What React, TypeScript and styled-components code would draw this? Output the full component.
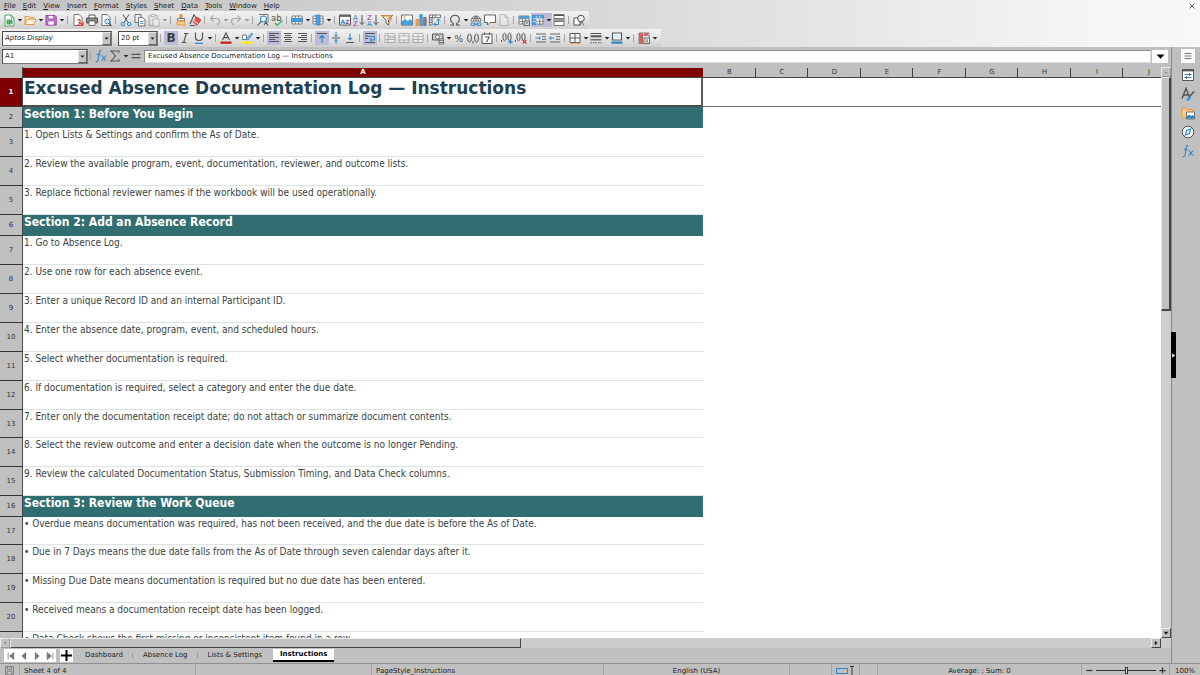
import React from "react";
import styled, { createGlobalStyle, css } from "styled-components";

const ink = "#555555";
const blue = "#2f86c6";
const ui = '"DejaVu Sans", sans-serif';

const Global = createGlobalStyle`
  * { box-sizing: border-box; }
  body { margin: 0; background: #c0c0c0; font-family: ${ui}; font-size: 7px; color: #1c1c1c; }
  button, input, select { font: inherit; color: inherit; margin: 0; padding: 0; border: 0; border-radius: 0; background: none; outline: none; }
  svg { display: block; flex: none; }
`;

const Window = styled.div`
  display: flex;
  flex-direction: column;
  height: 100vh;
  overflow: hidden;
`;

/* ---------- menu and toolbars ---------- */
const TopArea = styled.header`
  flex: none;
  background: linear-gradient(90deg, #c2c2c2 0%, #d8d8d8 50%, #f6f6f6 92%, #f8f8f8 100%);
`;
const MenuBar = styled.nav`
  display: flex;
  align-items: center;
  gap: 7px;
  height: 11px;
  padding: 0 4px;
`;
const MenuButton = styled.button`
  line-height: 10px;
  &::first-letter { text-decoration: underline; }
`;
const CloseButton = styled.button`
  display: flex;
  align-items: center;
  justify-content: center;
  width: 9px;
  height: 10px;
  margin-left: auto;
  background: #fff;
`;
const Toolbar = styled.div`
  display: flex;
  align-items: center;
  width: max-content;
  height: 18px;
  padding: 0 3px 0 2px;
  background: linear-gradient(180deg, #f2f2f2 0%, #e6e6e6 45%, #cfcfcf 100%);
`;
const Separator = styled.span`
  flex: none;
  width: 6px;
  height: 8px;
  background: linear-gradient(#a4a4a4, #a4a4a4) 2px 0 / 1px 8px no-repeat;
`;
const ToolButton = styled.button<{ $on?: boolean; $dim?: boolean }>`
  display: flex;
  align-items: center;
  justify-content: center;
  flex: none;
  width: 14px;
  height: 14px;
  ${(p) => p.$on && css`background: #bcbcd6;`}
  svg { opacity: ${(p) => (p.$dim ? 0.4 : 1)}; }
`;
const CaretButton = styled(ToolButton)`
  width: 7px;
`;
const ComboBox = styled.label<{ $w: number }>`
  position: relative;
  flex: none;
  width: ${(p) => p.$w}px;
  height: 15px;
  background: #fff;
  border: 1px solid #4c4c4c;
  border-right-color: #777;
  border-bottom-color: #777;
  & + & { margin-left: 6px; }
`;
const ComboSelect = styled.select<{ $italic?: boolean }>`
  display: block;
  appearance: none;
  width: 100%;
  height: 100%;
  padding-left: 2px;
  font-style: ${(p) => (p.$italic ? "italic" : "normal")};
`;
const ComboArrow = styled.span`
  position: absolute;
  top: 0;
  right: 0;
  bottom: 0;
  display: flex;
  align-items: center;
  justify-content: center;
  width: 9px;
  background: #c4c4c4;
  border: 1px solid #e8e8e8;
  border-right-color: #666;
  border-bottom-color: #666;
  pointer-events: none;
`;

/* ---------- work area ---------- */
const Body = styled.div`
  display: flex;
  flex: 1;
  min-height: 0;
`;
const Main = styled.main`
  display: flex;
  flex-direction: column;
  flex: 1;
  min-width: 0;
`;
const FormulaBar = styled.div`
  display: flex;
  align-items: center;
  flex: none;
  height: 18px;
  padding: 0 3px 0 2px;
`;
const FormulaInput = styled.input`
  flex: 1;
  min-width: 0;
  height: 13px;
  margin-left: 1px;
  padding: 0 3px;
  background: #fff;
  border: 1px solid #8c8c8c;
  border-right-color: #ddd;
  border-bottom-color: #ddd;
`;
const ExpandButton = styled.button`
  display: flex;
  align-items: center;
  justify-content: center;
  width: 16px;
  height: 13px;
  margin-left: 1px;
  background: #fff;
`;
const SheetArea = styled.div`
  display: flex;
  flex: 1;
  min-height: 0;
  padding-top: 2px;
`;
const GridView = styled.div`
  flex: 1;
  min-width: 0;
  overflow: hidden;
  background: #fff;
`;
const Grid = styled.table`
  table-layout: fixed;
  border-collapse: separate;
  border-spacing: 0;
  width: 1175px;
`;
const Col = styled.col<{ $w: number }>`
  width: ${(p) => p.$w}px;
`;
const headCell = css`
  padding: 0;
  background: #c0c0c0;
  color: #333;
  font-size: 7px;
  font-weight: 400;
  text-align: center;
`;
const ColumnHead = styled.th<{ $active?: boolean }>`
  ${headCell}
  height: 11px;
  line-height: 9px;
  border-bottom: 1px solid #484848;
  background: linear-gradient(#404040, #404040) right 1px / 1px 9px no-repeat, #c0c0c0;
  ${(p) => p.$active && css`
    background: linear-gradient(#c0c0c0 1px, #7f0000 1px);
    color: #fff;
    font-weight: 700;
  `}
`;
const Corner = styled.td`
  ${headCell}
  border-right: 1px solid #484848;
`;
const RowHead = styled.th<{ $active?: boolean }>`
  ${headCell}
  border-right: 1px solid #484848;
  border-bottom: 1px solid #333;
  ${(p) => p.$active && css`
    background: #7f0000;
    color: #fff;
    font-weight: 700;
  `}
`;
type Kind = "title" | "section" | "line";
const Cell = styled.td<{ $kind: Kind }>`
  padding: 0 0 0 1px;
  vertical-align: top;
  white-space: nowrap;
  color: #3a4245;
  ${(p) => p.$kind === "title" && css`
    height: 29px;
    font-size: 17px;
    line-height: 21px;
    font-weight: 700;
    color: #1d4154;
    border-right: 2px solid #5c5c5c;
    border-bottom: 2px solid #4c4c4c;
  `}
  ${(p) => p.$kind === "section" && css`
    height: 21px;
    font-size: 12px;
    line-height: 14px;
    font-weight: 700;
    font-family: "DejaVu Sans Condensed", "DejaVu Sans", sans-serif;
    color: #fff;
    background: #306e72;
  `}
  ${(p) => p.$kind === "line" && css`
    height: 29px;
    font-size: 10px;
    line-height: 13px;
    font-family: "DejaVu Sans Condensed", "DejaVu Sans", sans-serif;
    border-bottom: 1px solid #dde3e3;
    tr:nth-child(4n + 13) > & { height: 28px; }
  `}
`;
const EmptyCells = styled.td<{ $line?: boolean }>`
  padding: 0;
  border-bottom: ${(p) => (p.$line ? "1px solid #6a6a6a" : "0")};
`;

/* ---------- scroll bars ---------- */
const VScroll = styled.div`
  display: flex;
  flex-direction: column;
  flex: none;
  width: 10px;
  background: #cecece;
`;
const HScroll = styled.div`
  display: flex;
  flex: none;
  height: 10px;
  padding-right: 10px;
  background: #cccccc;
`;
const bevel = css`
  background: #c2c2c2;
  border: 1px solid #ececec;
  border-right-color: #444;
  border-bottom-color: #444;
`;
const ScrollButton = styled.button<{ $faint?: boolean }>`
  ${bevel}
  display: flex;
  align-items: center;
  justify-content: center;
  flex: none;
  width: 10px;
  height: 10px;
  ${(p) => p.$faint && css`
    border-right-color: #999;
    border-bottom-color: #999;
  `}
`;
const VThumb = styled.div`
  ${bevel}
  border-right-width: 2px;
  border-bottom-width: 2px;
  flex: 233;
`;
const VRest = styled.div`
  flex: 319;
`;
const HThumb = styled.div`
  ${bevel}
  flex: 509;
`;
const HRest = styled.div`
  flex: 631;
`;

/* ---------- sheet tabs ---------- */
const TabBar = styled.div`
  display: flex;
  flex: none;
  height: 15px;
  padding: 1px 0 0 4px;
`;
const TabNav = styled.div`
  display: flex;
  align-items: center;
  width: 52px;
  height: 13px;
  background: #fff;
`;
const NavButton = styled.button`
  display: flex;
  align-items: center;
  justify-content: center;
  flex: 1;
  height: 13px;
`;
const AddButton = styled.button`
  display: flex;
  align-items: center;
  justify-content: center;
  width: 13px;
  height: 13px;
  margin: 0 2px 0 4px;
  background: #fff;
`;
const Tab = styled.button<{ $active?: boolean }>`
  height: 13px;
  padding: 0 10px;
  line-height: 11px;
  background: linear-gradient(#999, #999) right 4px / 1px 5px no-repeat;
  &:nth-last-child(2) { background: none; }
  ${(p) => p.$active && css`
    margin-left: 1px;
    padding: 0 7px;
    font-weight: 700;
    color: #000;
    background: #fff;
    border-bottom: 2px solid #000;
  `}
`;

/* ---------- sidebar ---------- */
const Sidebar = styled.aside`
  position: relative;
  display: flex;
  flex-direction: column;
  align-items: center;
  gap: 5px;
  flex: none;
  width: 29px;
  padding: 2px 0 0 4px;
  border-left: 1px solid #8a8a8a;
`;
const DeckButton = styled.button<{ $light?: boolean }>`
  display: flex;
  align-items: center;
  justify-content: center;
  width: 14px;
  height: 14px;
  background: ${(p) => (p.$light ? "#fff" : "none")};
`;
const Grip = styled.button`
  position: absolute;
  left: -1px;
  top: 285px;
  display: flex;
  align-items: center;
  justify-content: center;
  width: 5px;
  height: 46px;
  background: #000;
`;

/* ---------- status bar ---------- */
const StatusBar = styled.footer`
  display: grid;
  grid-template-columns: 20px 176fr 176fr 232fr 186fr 42px 28px 18px 204fr 88px 30px;
  flex: none;
  height: 12px;
  border-top: 1px solid #8f8f8f;
`;
const StatusItem = styled.div<{ $align?: "center" | "start" }>`
  display: flex;
  align-items: center;
  justify-content: ${(p) => p.$align ?? "center"};
  padding: 1px 4px 0;
  line-height: 10px;
  white-space: nowrap;
  border-right: 1px solid #a4a4a4;
  &:last-child { border-right: 0; }
`;
const ZoomGroup = styled(StatusItem)`
  padding: 1px 3px 0 4px;
  gap: 3px;
`;
const ZoomStep = styled.button`
  display: flex;
  flex: none;
`;
const ZoomRange = styled.input`
  appearance: none;
  flex: 1;
  min-width: 0;
  height: 9px;
  background: linear-gradient(#333, #333) center / 100% 1px no-repeat;
  &::-webkit-slider-thumb {
    appearance: none;
    width: 3px;
    height: 7px;
    background: #ddd;
    border: 1px solid #333;
  }
`;

/* ---------- icons, drawn on a 14-unit square ---------- */
const page = <path d="M3 1.5h5l3 3v8H3z" fill="#fff" stroke={ink} strokeWidth=".8" />;
const gridLines = <path d="M2 3h10v8H2zM2 5.7h10M2 8.4h10M5.3 3v8M8.7 3v8" fill="#fff" stroke={ink} strokeWidth=".7" />;
const letter = (t: string, x: number, y: number, s: number, fill = ink, w = 400) => (
  <text x={x} y={y} fontSize={s} fill={fill} fontWeight={w} fontFamily="DejaVu Sans, sans-serif">{t}</text>
);
const lines = (rows: [number, number][]) => rows.map(([a, b], i) => (
  <path key={i} d={`M${a} ${2.5 + i * 2}H${b}`} stroke={ink} strokeWidth="1" />
));

const icons: Record<string, React.ReactNode> = {
  new: <><path d="M3 2h6l3 3v8H3z" fill="#fff" stroke="#3a9a55" strokeWidth=".9" /><path d="M9 2v3h3" fill="none" stroke="#3a9a55" strokeWidth=".8" /><path d="M5 7h5v4H5zM5 9h5M7.5 7v4" fill="#8fd0a0" stroke="#2d9048" strokeWidth=".8" /></>,
  open: <><path d="M2 11.5V3.5h3.500l1 1.200H11V6" fill="#fbe3c4" stroke="#e79a3c" /><path d="M2 11.500l2.200-5.300H13L11 11.500z" fill="#fff3e0" stroke="#e79a3c" /></>,
  save: <><path d="M2 2.500h9l1.200 1.200v8.300H2z" fill="#c77ad0" stroke="#9a3ea8" /><path d="M4.200 2.500h5v3.300h-5zM4 8h6v4H4z" fill="#fff" stroke="#9a3ea8" strokeWidth=".6" /></>,
  pdf: <>{page}<path d="M7 7.500c0-2 3-1 2 1.500s-2.500 3.500-1 3.500M8 9l4 3M12 9v3.200H9" fill="none" stroke="#d8322c" strokeWidth="1.100" /></>,
  print: <><path d="M4 5V2h6v3" fill="#fff" stroke={ink} /><path d="M1.500 5h11v5h-11z" fill="#888" stroke={ink} /><path d="M4 8h6v4.500H4z" fill="#fff" stroke={ink} strokeWidth=".8" /></>,
  preview: <>{page}<circle cx="8.3" cy="8.500" r="2.400" fill="#d6ecfa" stroke={blue} /><path d="M10 10.500l2.500 2.500" stroke={ink} strokeWidth="1.100" /></>,
  cut: <><path d="M4 1.500l5 8M10 1.500l-5 8" stroke={ink} strokeWidth="1" /><circle cx="3.800" cy="11" r="1.700" fill="none" stroke={blue} /><circle cx="10.200" cy="11" r="1.700" fill="none" stroke={blue} /></>,
  copy: <><path d="M2 1.500h6v8H2z" fill="#eee" stroke={ink} strokeWidth=".8" /><path d="M5.500 4.500h4l2.500 2.400v6H5.500z" fill="#fff" stroke={ink} strokeWidth=".8" /><path d="M7 8.500h3.500M7 10.500h3.500" stroke={blue} strokeWidth=".8" /></>,
  paste: <><path d="M2 2.500h8v10H2z" fill="#ddd" stroke={ink} /><path d="M4 1.500h4v2H4zM6 6h6v7H6z" fill="#fff" stroke={ink} strokeWidth=".8" /></>,
  brush: <><path d="M6 1.500h2v4H6z" fill="#f0a04a" stroke="#c77420" strokeWidth=".7" /><path d="M3.500 5.500h7v2.300h-7z" fill="#fff" stroke={ink} strokeWidth=".8" /><path d="M3 8h8v4H3z" fill="#f7c98d" stroke="#e08e2c" strokeWidth=".8" /></>,
  clear: <><path d="M2 11L6 2l3 4" fill="none" stroke={ink} strokeWidth="1.200" /><path d="M5 9l4-5 4 3-4 5.200z" fill="#e8504c" stroke="#b52c28" strokeWidth=".7" /><path d="M6 7.800l4 3" stroke="#fff" /><path d="M2 12.500h5" stroke={ink} /></>,
  undo: <path d="M5.500 2.500L2.500 5.500l3 3M2.500 5.500H9c4 1 3 5 0 6.500" fill="none" stroke={ink} strokeWidth="1.200" />,
  redo: <path d="M8.500 2.500l3 3-3 3M11.500 5.500H5c-4 1-3 5 0 6.500" fill="none" stroke={ink} strokeWidth="1.200" />,
  find: <><path d="M3 1.500h9v8" fill="#eef5fb" stroke={ink} strokeWidth=".8" /><circle cx="7.500" cy="6" r="3" fill="#fff" stroke={blue} strokeWidth="1.100" /><path d="M5.300 8.300L1.500 12.500M8 12l2-3 2 3.400" fill="none" stroke={ink} strokeWidth="1.100" /></>,
  spell: <>{letter("ab", 1, 7.5, 8.5)}<path d="M5 10l2.300 2.300L12.500 7.500" fill="none" stroke="#3fa564" strokeWidth="1.200" /></>,
  row: <>{gridLines}<path d="M1.500 5.500h11v3.200h-11z" fill="#4aa0de" stroke={blue} strokeWidth=".7" /></>,
  column: <>{gridLines}<path d="M5.200 2h3.700v10H5.200z" fill="#4aa0de" stroke={blue} strokeWidth=".7" /></>,
  sort: <><path d="M1.500 2h11v10h-11z" fill="#fff" stroke={ink} /><path d="M1.500 3h11" stroke={ink} strokeWidth="1.600" />{letter("A", 2.5, 10.500, 6, blue, 700)}{letter("Z", 7.2, 10.500, 6, "#9a3ea8", 700)}</>,
  sortUp: <>{letter("A", 1, 6.500, 7, blue)}{letter("Z", 1, 13, 7, "#9a3ea8")}<path d="M10 2v9.500M7.800 9.200L10 11.600l2.300-2.400" fill="none" stroke={ink} /></>,
  sortDown: <>{letter("Z", 1, 6.500, 7, "#9a3ea8")}{letter("A", 1, 13, 7, blue)}<path d="M10 2v9.500M7.800 9.200L10 11.600l2.300-2.400" fill="none" stroke={ink} /></>,
  filter: <><path d="M1.500 2.500h11L8.500 7v5L6 10V7z" fill="#fff" stroke={ink} /><path d="M2 3h9L7.500 6.500M8.700 11l3-6" fill="none" stroke="#f0a04a" strokeWidth="1.300" /></>,
  image: <><path d="M1.500 2h11v10h-11z" fill="#fff" stroke={ink} strokeWidth=".8" /><path d="M2 11.600V9l3-3 2.600 2.400L10 6.500l2.200 2v3.100z" fill="#4aa0de" stroke={blue} strokeWidth=".6" /><circle cx="4.500" cy="4.300" r="1.100" fill="#f0a04a" /></>,
  chart: <><path d="M2 6.500h2.600v6H2z" fill="#f5a04a" stroke="#dd8022" strokeWidth=".6" /><path d="M5.800 1.500h2.600v11H5.800z" fill="#4aa0de" stroke={blue} strokeWidth=".6" /><path d="M9.600 4.500h2.600v8H9.600z" fill="#888" stroke={ink} strokeWidth=".6" /></>,
  pivot: <><path d="M1.500 2h11v2.600h-11zM1.500 4.600h2.600V12H1.500zM4.500 2v2.600M7.200 2v2.600M1.500 7h2.600M1.500 9.500h2.600" fill="#fff" stroke={ink} strokeWidth=".8" /><path d="M6 11.500h4.500V6M8.800 7.700l1.700-1.900 1.800 1.900M7.600 9.700L5.800 11.500l1.800 1.700" fill="none" stroke={blue} /></>,
  omega: <path d="M2 12h3.400v-1.400C1 8 2.300 2.200 7 2.200S13 8 8.600 10.600V12H12" fill="none" stroke={ink} strokeWidth="1.100" />,
  link: <><path d="M2 8a5 5 0 0 1 10 0zM7 3v5M3 5.500h8M4.800 8c0-2 .7-4 2.200-5 1.500 1 2.200 3 2.200 5" fill="#fff" stroke={ink} strokeWidth=".8" /><path d="M2 10h4v2.300H2zM8 10h4v2.300H8zM5 11.200h4" fill="none" stroke={blue} strokeWidth=".9" /></>,
  comment: <path d="M1.500 2h11v7.500H7L4.500 12V9.500h-3z" fill="#fff" stroke={ink} strokeWidth=".9" />,
  header: <><path d="M3 1.500h5l3 3v8H3z" fill="#eee" stroke={ink} strokeWidth=".8" /><path d="M8 1.500v3h3" fill="none" stroke={ink} strokeWidth=".8" /></>,
  printArea: <>{gridLines}<path d="M2 3h10v2.400H2z" fill="#4aa0de" /><path d="M7 8h5.500v4.500H7zM8.500 10h2.500" fill="#ddd" stroke={ink} strokeWidth=".9" /></>,
  freeze: <>{gridLines}<path d="M1.500 2.500h11v3h-11zM1.500 5.500H5v6H1.500z" fill="#4aa0de" stroke={blue} strokeWidth=".7" /><path d="M5.300 2.500v9M1.500 5.700h11M8.700 2.500v3M1.500 8.500H5" stroke="#fff" strokeWidth=".6" /></>,
  split: <><path d="M2 1.500h10v4H2zM2 8.500h10v4H2z" fill="#fff" stroke={ink} strokeWidth=".8" /><path d="M2 2.500h10M1 7h12" stroke={ink} strokeWidth="1.100" /></>,
  shapes: <><path d="M2 5h6v7H2z" fill="#fff" stroke={ink} /><circle cx="9" cy="5.500" r="3.300" fill="#eee" stroke={ink} /><path d="M8 12.500l2-3.500 2 3.500" fill="none" stroke={ink} strokeWidth=".8" /></>,
  bold: letter("B", 2.5, 11.200, 12, "#3c3c3c", 700),
  italic: <path d="M6 2.500h4.500M3.500 11.500H8M8.300 2.500l-2.600 9" stroke={ink} strokeWidth="1.100" />,
  underline: <><path d="M3.500 1.500V6.500c0 4 7 4 7 0V1.500" fill="none" stroke={ink} strokeWidth="1.200" /><path d="M3 12.300h8" stroke={blue} strokeWidth="1.200" /></>,
  fontColor: <><path d="M3.500 9L7 1.800 10.500 9M4.800 6.600h4.400" fill="none" stroke={ink} strokeWidth="1.200" /><path d="M1.500 10.500h11v2.300h-11z" fill="#c9211e" /></>,
  highlight: <><path d="M1.500 10.500h11v2.300h-11z" fill="#ffef00" /><path d="M2.500 8.500V4h4v4.500z" fill="#fff" stroke={ink} strokeWidth=".8" /><path d="M6 8.500l5.500-6.500 1.300 1-4.500 6z" fill="#8cc4ea" stroke={blue} strokeWidth=".8" /></>,
  left: lines([[2, 12], [2, 8], [2, 12], [2, 8], [2, 12]]),
  center: lines([[3, 11], [4, 10], [3, 11], [4, 10], [3, 11]]),
  right: lines([[3, 12], [6, 12], [3, 12], [6, 12], [3, 12]]),
  top: <><path d="M2 2.500h10" stroke={ink} /><path d="M7 12V4.500M4.500 7L7 4.500 9.500 7" fill="none" stroke={blue} strokeWidth="1.200" /></>,
  middle: <><path d="M3 7h8" stroke={ink} /><path d="M7 1v4.500M5.200 3.800L7 5.500l1.800-1.700M7 13V8.500M5.200 10.200L7 8.500l1.800 1.700" fill="none" stroke={blue} /></>,
  bottom: <><path d="M3 11.500h8" stroke={ink} /><path d="M7 2.500v6M5 6.800l2 2 2-2" fill="none" stroke={blue} strokeWidth="1.100" /></>,
  wrap: <><path d="M2 2.500h10M2 5h3M2 7.500h3M2 11.500h10" stroke={ink} /><path d="M5 5.500h6.500v3.500H7M8.700 7.200L7 9l1.700 1.700" fill="none" stroke={blue} /></>,
  merge: <path d="M2 2.500h10v9H2zM2 5h10M2 8.500h10M5 2.500v9M5 6.700h7" fill="#fff" stroke={ink} strokeWidth=".9" />,
  mergeCenter: <path d="M2 2.500h10v9H2zM2 5h10M2 9h10M7 2.500V5M7 9v2.500" fill="#fff" stroke={ink} strokeWidth=".9" />,
  unmerge: <path d="M2 2.500h10v9H2zM2 5.500h10M2 8.500h10M7 2.500v9" fill="#fff" stroke={ink} strokeWidth=".9" />,
  currency: <><path d="M1.500 3h10.500v6H1.500z" fill="#ccc" stroke={ink} /><circle cx="6.500" cy="6" r="1.900" fill="#fff" stroke={ink} strokeWidth=".8" /><path d="M8 8h4.500v5H8zM8 9.700h4.500M8 11.400h4.500" fill="#eee" stroke={ink} strokeWidth=".8" /></>,
  percent: letter("%", 2.5, 10.500, 9),
  number: <><ellipse cx="3.500" cy="7" rx="1.900" ry="4" fill="none" stroke={ink} /><path d="M7 10v2.500" stroke={ink} /><ellipse cx="10.500" cy="7" rx="1.900" ry="4" fill="none" stroke={ink} /></>,
  date: <><path d="M2 3h10v9.500H2zM4.500 1.500V4M9.500 1.500V4" fill="#fff" stroke={ink} /><path d="M4.800 6h4.400L6.500 11" fill="none" stroke={ink} strokeWidth="1.100" /></>,
  addDecimal: <><ellipse cx="4.500" cy="6" rx="1.600" ry="3.800" fill="none" stroke={ink} /><ellipse cx="9.500" cy="6" rx="1.600" ry="3.800" fill="none" stroke={ink} /><path d="M1.500 9v2" stroke={ink} /><path d="M10.500 8.500v4.500M8.300 10.800h4.500" stroke={blue} strokeWidth="1.200" /></>,
  delDecimal: <><ellipse cx="4.500" cy="6" rx="1.600" ry="3.800" fill="none" stroke={ink} /><ellipse cx="9.500" cy="6" rx="1.600" ry="3.800" fill="none" stroke={ink} /><path d="M1.500 9v2" stroke={ink} /><path d="M8.700 9l3.600 3.600M12.300 9l-3.600 3.600" stroke="#d8322c" strokeWidth="1.100" /></>,
  indent: <><path d="M2 3h10M8 5.700h4M8 8.300h4M2 11h10" stroke={ink} strokeWidth=".9" /><path d="M1.500 7h5M4.700 5.200L6.500 7 4.700 8.800" fill="none" stroke={blue} /></>,
  outdent: <><path d="M2 3h10M8 5.700h4M8 8.300h4M2 11h10" stroke={ink} strokeWidth=".9" /><path d="M1.500 7h5M3.300 5.200L1.500 7l1.800 1.800" fill="none" stroke={blue} /></>,
  borders: <><path d="M2 2.500h10v9H2z" fill="#fff" stroke={ink} /><path d="M7 2.500v9M2 7h10" stroke={ink} /><path d="M2 12.300h10" stroke="#e79a3c" /></>,
  lineStyle: <><path d="M1.500 2.500h11" stroke={ink} strokeWidth="1" /><path d="M1.500 5.300h11" stroke={ink} strokeWidth="2" /><path d="M1.500 8.800h11" stroke={ink} strokeWidth="1.200" /><path d="M1.500 11.800h11" stroke={ink} strokeDasharray="1.500 1" /></>,
  borderColor: <><path d="M2.500 2h9v7h-9z" fill="#fff" stroke={ink} strokeWidth="1.200" /><path d="M1.500 10.500h11v2.200h-11z" fill={blue} /><path d="M4 3.500h6v4H4z" fill="#d6ecfa" /></>,
  conditional: <><path d="M2 2h10v10.500H2zM2 4.700h10M2 7.300h10M2 10h10M5.500 2v10.500" fill="#fff" stroke={ink} strokeWidth=".7" /><path d="M2 2h3.500v10.500H2zM7 2h4v2.500H7z" fill="#ea5a58" /><path d="M7 7h5.500v5.500H7zM8.500 9h2.500M8.500 10.800h2.500" fill="#eee" stroke={ink} strokeWidth=".8" /></>,
  fx: <g fill="none" stroke={blue} strokeWidth="1.100"><path d="M7.500 1.800C5.800.8 5.300 2.500 5 5l-.6 4.500c-.3 2.500-1 3.700-2.700 3M2.800 5.500h4M7.500 6.500c1.500 0 2.800 5.500 4.700 5M12.500 6.500c-1.500 0-3.400 5.500-5.300 5" /></g>,
  sigma: <path d="M11 4V2H3l4.500 5L3 12h8v-2" fill="none" stroke={ink} strokeWidth="1.100" />,
  equals: <path d="M2.500 5.300h9M2.500 8.700h9" stroke={ink} strokeWidth="1.300" />,
  caret: <path d="M3.800 5.500h6.400L7 9z" fill="#222" />,
  close: <path d="M2.500 2.500l9 9M11.500 2.500l-9 9" stroke={ink} strokeWidth="1.600" />,
  expand: <path d="M2 4.500h10L7 10z" fill="#000" />,
  menu: <path d="M3 4h8M3 7h8M3 10h8" stroke={ink} strokeWidth="1" />,
  properties: <><path d="M1.500 1.500h11v11h-11z" fill="#fff" stroke={ink} /><path d="M1.500 2.500h11" stroke={ink} strokeWidth="1.800" /><path d="M3.500 6.500h7M3.500 9.500h7" stroke={blue} /><path d="M8.500 5.300v2.400M5.500 8.300v2.400" stroke={ink} /></>,
  styles: <><path d="M1 11.500L5 1.500l4 10M2.300 8h5.200" fill="none" stroke={ink} strokeWidth="1.500" /><path d="M13 4.500L8.500 9.500" stroke={ink} strokeWidth="1.700" /><path d="M5.500 13c1 0 .7-3 2.700-3.500l1.600 1.400C9.500 13 7 13.500 5.500 13z" fill="#4aa0de" stroke={blue} strokeWidth=".6" /></>,
  gallery: <><path d="M1 12V2h4l1 1.500h6V12z" fill="#f7c98d" stroke="#e79a3c" /><path d="M5.500 6h8v7h-8z" fill="#fff" stroke={ink} strokeWidth=".8" /><path d="M6 12.500v-2l2-2 2 1.500 1.500-1 1.700 1.500v2z" fill={blue} /></>,
  navigator: <><circle cx="7" cy="7" r="5.800" fill="#fff" stroke={ink} /><path d="M9.800 3.800L8.500 8.500 4.200 10.200 5.500 5.500z" fill="#d6ecfa" stroke={blue} strokeWidth="1.100" /></>,
  first: <path d="M3 2v10M11 2L5 7l6 5z" fill="#777" stroke="#777" />,
  prev: <path d="M10 1L3.500 7l6.500 6z" fill="#777" />,
  next: <path d="M4 1l6.500 6L4 13z" fill="#777" />,
  last: <path d="M11 2v10M3 2l6 5-6 5z" fill="#777" stroke="#777" />,
  add: <path d="M7 1v12M1 7h12" stroke="#000" strokeWidth="2.200" />,
  up: <path d="M4 9h6L7 5.500z" fill="#888" />,
  down: <path d="M3 5h8L7 10z" fill="#111" />,
  toLeft: <path d="M9 4v6L5.500 7z" fill="#888" />,
  toRight: <path d="M5 3v8l4.500-4z" fill="#111" />,
  grip: <path d="M3 1v12l9-6z" fill="#ddd" />,
  disk: <path d="M2 2h10v10.500H2zM4.500 2v3.500h5V2M4 12.500V8h6v4.500" fill="none" stroke="#777" strokeWidth="1.100" />,
  minus: <path d="M1 7h12" stroke="#333" strokeWidth="2.500" />,
  plus: <path d="M1 7h12M7 1v12" stroke="#333" strokeWidth="2.500" />,
};

const Icon = ({ name, size = 14 }: { name: string; size?: number }) => (
  <svg width={size} height={size} viewBox="0 0 14 14" aria-hidden="true">{icons[name]}</svg>
);

type Tool = { id: string; label: string; caret?: boolean; on?: boolean; dim?: boolean };
const t = (id: string, label: string, flags = ""): Tool => ({
  id, label, caret: flags.includes("c"), on: flags.includes("o"), dim: flags.includes("d"),
});

const standard: Tool[][] = [
  [t("new", "New", "c"), t("open", "Open", "c"), t("save", "Save", "c")],
  [t("pdf", "Export as PDF"), t("print", "Print"), t("preview", "Print Preview")],
  [t("cut", "Cut"), t("copy", "Copy"), t("paste", "Paste", "cd")],
  [t("brush", "Clone Formatting"), t("clear", "Clear Formatting")],
  [t("undo", "Undo", "cd"), t("redo", "Redo", "cd")],
  [t("find", "Find and Replace"), t("spell", "Spelling")],
  [t("row", "Row", "c"), t("column", "Column", "c")],
  [t("sort", "Sort"), t("sortUp", "Sort Ascending"), t("sortDown", "Sort Descending"), t("filter", "AutoFilter")],
  [t("image", "Insert Image"), t("chart", "Insert Chart"), t("pivot", "Insert Pivot Table")],
  [t("omega", "Special Character", "c"), t("link", "Hyperlink"), t("comment", "Comment"), t("header", "Headers and Footers", "d")],
  [t("printArea", "Define Print Area"), t("freeze", "Freeze Rows and Columns", "co"), t("split", "Split Window")],
  [t("shapes", "Show Draw Functions")],
];

const formatting: Tool[][] = [
  [t("bold", "Bold", "o"), t("italic", "Italic"), t("underline", "Underline", "c")],
  [t("fontColor", "Font Color", "c"), t("highlight", "Background Color", "c")],
  [t("left", "Align Left", "o"), t("center", "Center Horizontally"), t("right", "Align Right")],
  [t("top", "Align Top", "o"), t("middle", "Center Vertically"), t("bottom", "Align Bottom")],
  [t("wrap", "Wrap Text", "o")],
  [t("merge", "Merge and Center", "d"), t("mergeCenter", "Merge Cells", "d"), t("unmerge", "Unmerge Cells", "d")],
  [t("currency", "Currency", "c"), t("percent", "Percent"), t("number", "Number"), t("date", "Date")],
  [t("addDecimal", "Add Decimal Place"), t("delDecimal", "Delete Decimal Place")],
  [t("indent", "Increase Indent"), t("outdent", "Decrease Indent")],
  [t("borders", "Borders", "c"), t("lineStyle", "Border Style", "c"), t("borderColor", "Border Color", "c")],
  [t("conditional", "Conditional", "c")],
];

const Tools = ({ groups }: { groups: Tool[][] }) => (
  <>
    {groups.map((group, i) => (
      <React.Fragment key={i}>
        {i > 0 && <Separator />}
        {group.map((tool) => (
          <React.Fragment key={tool.id}>
            <ToolButton aria-label={tool.label} $on={tool.on} $dim={tool.dim}><Icon name={tool.id} /></ToolButton>
            {tool.caret && (
              <CaretButton aria-label={`${tool.label} options`} $on={tool.on} $dim={tool.dim}><Icon name="caret" size={10} /></CaretButton>
            )}
          </React.Fragment>
        ))}
      </React.Fragment>
    ))}
  </>
);

const Combo = ({ label, value, width, italic }: { label: string; value: string; width: number; italic?: boolean }) => (
  <ComboBox $w={width}>
    <ComboSelect aria-label={label} $italic={italic} defaultValue={value}><option>{value}</option></ComboSelect>
    <ComboArrow><Icon name="caret" size={9} /></ComboArrow>
  </ComboBox>
);

const menus = ["File", "Edit", "View", "Insert", "Format", "Styles", "Sheet", "Data", "Tools", "Window", "Help"];
const title = "Excused Absence Documentation Log — Instructions";
const rows: [Kind, string][] = [
  ["title", title],
  ["section", "Section 1: Before You Begin"],
  ["line", "1. Open Lists & Settings and confirm the As of Date."],
  ["line", "2. Review the available program, event, documentation, reviewer, and outcome lists."],
  ["line", "3. Replace fictional reviewer names if the workbook will be used operationally."],
  ["section", "Section 2: Add an Absence Record"],
  ["line", "1. Go to Absence Log."],
  ["line", "2. Use one row for each absence event."],
  ["line", "3. Enter a unique Record ID and an internal Participant ID."],
  ["line", "4. Enter the absence date, program, event, and scheduled hours."],
  ["line", "5. Select whether documentation is required."],
  ["line", "6. If documentation is required, select a category and enter the due date."],
  ["line", "7. Enter only the documentation receipt date; do not attach or summarize document contents."],
  ["line", "8. Select the review outcome and enter a decision date when the outcome is no longer Pending."],
  ["line", "9. Review the calculated Documentation Status, Submission Timing, and Data Check columns."],
  ["section", "Section 3: Review the Work Queue"],
  ["line", "• Overdue means documentation was required, has not been received, and the due date is before the As of Date."],
  ["line", "• Due in 7 Days means the due date falls from the As of Date through seven calendar days after it."],
  ["line", "• Missing Due Date means documentation is required but no due date has been entered."],
  ["line", "• Received means a documentation receipt date has been logged."],
  ["line", "• Data Check shows the first missing or inconsistent item found in a row."],
];
const columnWidths = [23, 680, 53, 52, 53, 52, 53, 52, 53, 52, 52];
const deck = [["properties", "Properties"], ["styles", "Styles"], ["gallery", "Gallery"], ["navigator", "Navigator"], ["fx", "Functions"]];
const nav = [["first", "First sheet"], ["prev", "Previous sheet"], ["next", "Next sheet"], ["last", "Last sheet"]];

export default function App() {
  return (
    <Window>
      <Global />
      <TopArea>
        <MenuBar>
          {menus.map((m) => <MenuButton key={m}>{m}</MenuButton>)}
          <CloseButton aria-label="Close document"><Icon name="close" size={8} /></CloseButton>
        </MenuBar>
        <Toolbar><Tools groups={standard} /></Toolbar>
        <Toolbar>
          <Combo label="Font name" value="Aptos Display" width={110} italic />
          <Combo label="Font size" value="20 pt" width={40} />
          <Separator />
          <Tools groups={formatting} />
        </Toolbar>
      </TopArea>
      <Body>
        <Main>
          <FormulaBar>
            <Combo label="Name box" value="A1" width={86} />
            <Separator />
            <ToolButton aria-label="Function wizard"><Icon name="fx" /></ToolButton>
            <ToolButton aria-label="Select function"><Icon name="sigma" /></ToolButton>
            <CaretButton aria-label="Select function options"><Icon name="caret" size={10} /></CaretButton>
            <ToolButton aria-label="Formula"><Icon name="equals" /></ToolButton>
            <FormulaInput aria-label="Input line" defaultValue={title} />
            <ExpandButton aria-label="Expand formula bar"><Icon name="expand" size={11} /></ExpandButton>
          </FormulaBar>
          <SheetArea>
            <GridView>
              <Grid>
                <colgroup>{columnWidths.map((w, i) => <Col key={i} $w={w} />)}</colgroup>
                <thead>
                  <tr>
                    <Corner />
                    {"ABCDEFGHIJ".split("").map((c) => <ColumnHead key={c} scope="col" $active={c === "A"}>{c}</ColumnHead>)}
                  </tr>
                </thead>
                <tbody>
                  {rows.map(([kind, text], i) => (
                    <tr key={i}>
                      <RowHead scope="row" $active={i === 0}>{i + 1}</RowHead>
                      <Cell $kind={kind}>{text}</Cell>
                      <EmptyCells colSpan={9} $line={i === 0} />
                    </tr>
                  ))}
                </tbody>
              </Grid>
            </GridView>
            <VScroll>
              <ScrollButton $faint aria-label="Scroll up"><Icon name="up" size={8} /></ScrollButton>
              <VThumb />
              <VRest />
              <ScrollButton aria-label="Scroll down"><Icon name="down" size={8} /></ScrollButton>
            </VScroll>
          </SheetArea>
          <HScroll>
            <ScrollButton $faint aria-label="Scroll left"><Icon name="toLeft" size={8} /></ScrollButton>
            <HThumb />
            <HRest />
            <ScrollButton aria-label="Scroll right"><Icon name="toRight" size={8} /></ScrollButton>
          </HScroll>
          <TabBar>
            <TabNav>
              {nav.map(([id, label]) => <NavButton key={id} aria-label={label}><Icon name={id} size={10} /></NavButton>)}
            </TabNav>
            <AddButton aria-label="Add sheet"><Icon name="add" size={13} /></AddButton>
            <Tab>Dashboard</Tab>
            <Tab>Absence Log</Tab>
            <Tab>Lists &amp; Settings</Tab>
            <Tab $active>Instructions</Tab>
          </TabBar>
        </Main>
        <Sidebar>
          <DeckButton $light aria-label="Sidebar settings"><Icon name="menu" size={12} /></DeckButton>
          {deck.map(([id, label]) => <DeckButton key={id} aria-label={label}><Icon name={id} /></DeckButton>)}
          <Grip aria-label="Hide sidebar"><Icon name="grip" size={5} /></Grip>
        </Sidebar>
      </Body>
      <StatusBar>
        <StatusItem><Icon name="disk" size={11} /></StatusItem>
        <StatusItem $align="start">Sheet 4 of 4</StatusItem>
        <StatusItem />
        <StatusItem $align="start">PageStyle_Instructions</StatusItem>
        <StatusItem>English (USA)</StatusItem>
        <StatusItem />
        <StatusItem>
          <svg width="20" height="10" viewBox="0 0 20 10" aria-hidden="true">
            <path d="M.5 2.500h11v5H.5z" fill="none" stroke={blue} />
            <path d="M14 .5h4M14 9.500h4M16 .5v9" stroke="#333" />
          </svg>
        </StatusItem>
        <StatusItem />
        <StatusItem>Average: ; Sum: 0</StatusItem>
        <ZoomGroup>
          <ZoomStep aria-label="Zoom out"><Icon name="minus" size={7} /></ZoomStep>
          <ZoomRange type="range" aria-label="Zoom" min={0} max={100} defaultValue={50} />
          <ZoomStep aria-label="Zoom in"><Icon name="plus" size={7} /></ZoomStep>
        </ZoomGroup>
        <StatusItem>100%</StatusItem>
      </StatusBar>
    </Window>
  );
}
